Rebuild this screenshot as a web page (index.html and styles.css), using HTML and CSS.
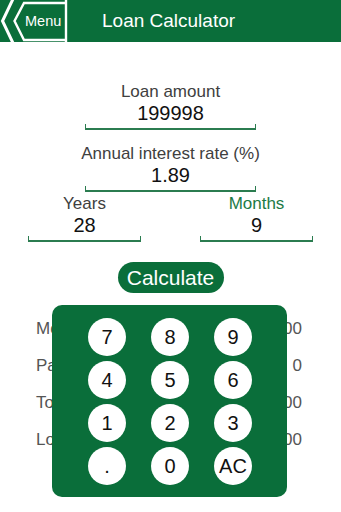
FILE: index.html
```html
<!DOCTYPE html>
<html>
<head>
<meta charset="utf-8">
<link rel="stylesheet" href="styles.css">
</head>
<body>
<div class="page">
  <header class="topbar">
    <div class="menu">
      <svg class="menu-shape" width="68" height="42" viewBox="0 0 68 42">
        <polyline points="13,-1 2.5,21 13,43" fill="none" stroke="#fff" stroke-width="3"/>
        <polyline points="66,3 24,3 14.5,21 24,40 66,40" fill="none" stroke="#fff" stroke-width="2.4"/>
        <line x1="66" y1="0" x2="66" y2="42" stroke="#fff" stroke-width="2.4"/>
      </svg>
      <span class="menu-text">Menu</span>
    </div>
    <h1 class="title">Loan Calculator</h1>
  </header>

  <main class="form">
    <div class="field field-wide gap-big">
      <div class="label">Loan amount</div>
      <div class="value">199998</div>
      <div class="underline"></div>
    </div>
    <div class="field field-wide gap-small">
      <div class="label">Annual interest rate (%)</div>
      <div class="value">1.89</div>
      <div class="underline"></div>
    </div>
    <div class="pair">
      <div class="field">
        <div class="label">Years</div>
        <div class="value">28</div>
        <div class="underline"></div>
      </div>
      <div class="field">
        <div class="label label-active">Months</div>
        <div class="value">9</div>
        <div class="underline"></div>
      </div>
    </div>
    <button class="calc">Calculate</button>

    <div class="results">
      <div class="result"><span>Monthly payment</span><span>0.00</span></div>
      <div class="result"><span>Payments</span><span>0</span></div>
      <div class="result"><span>Total payment</span><span>0.00</span></div>
      <div class="result"><span>Loan interest</span><span>0.00</span></div>
    </div>
  </main>

  <div class="keypad">
    <button class="key">7</button>
    <button class="key">8</button>
    <button class="key">9</button>
    <button class="key">4</button>
    <button class="key">5</button>
    <button class="key">6</button>
    <button class="key">1</button>
    <button class="key">2</button>
    <button class="key">3</button>
    <button class="key">.</button>
    <button class="key">0</button>
    <button class="key">AC</button>
  </div>
</div>
</body>
</html>
```

FILE: styles.css
```css
html, body {
  margin: 0;
  padding: 0;
  background: #fff;
}

.page {
  position: relative;
  width: 341px;
  height: 512px;
  overflow: hidden;
  font-family: "Liberation Sans", Arial, sans-serif;
}

.topbar {
  height: 42px;
  background: #0a6e3a;
  display: flex;
  align-items: center;
}

.menu {
  position: relative;
  width: 68px;
  height: 42px;
  flex: none;
}

.menu-shape {
  display: block;
}

.menu-text {
  position: absolute;
  left: 25px;
  top: 12px;
  color: #fff;
  font-size: 14.5px;
  line-height: 18px;
}

.title {
  margin: 0 0 0 34px;
  color: #fff;
  font-weight: normal;
  font-size: 19px;
  line-height: 22px;
}

.form {
  display: flex;
  flex-direction: column;
  align-items: center;
  padding-top: 40px;
}

.field {
  display: flex;
  flex-direction: column;
  align-items: center;
  width: 113px;
}

.field-wide {
  width: 171px;
}

.gap-big {
  margin-bottom: 14px;
}

.gap-small {
  margin-bottom: 2px;
}

.label {
  font-size: 17px;
  line-height: 20px;
  color: #404040;
  white-space: nowrap;
}

.label-active {
  color: #1c7a46;
}

.value {
  font-size: 20px;
  line-height: 22px;
  color: #111;
}

.underline {
  align-self: stretch;
  height: 4px;
  margin-top: 0;
  border-bottom: 2px solid #2b7c50;
  background:
    linear-gradient(#2b7c50, #2b7c50) left bottom / 1px 100% no-repeat,
    linear-gradient(#2b7c50, #2b7c50) right bottom / 1px 100% no-repeat;
}

.pair {
  align-self: stretch;
  display: flex;
  justify-content: space-between;
  padding: 0 28px;
}

.calc {
  margin-top: 20px;
  width: 106px;
  height: 31px;
  border: none;
  border-radius: 16px;
  background: #0a6e3a;
  color: #fff;
  font-family: "Liberation Sans", Arial, sans-serif;
  font-size: 21px;
  line-height: 31px;
  padding: 0;
}

.results {
  align-self: stretch;
  margin-top: 26px;
  padding: 0 39px 0 36px;
  display: flex;
  flex-direction: column;
  gap: 17px;
}

.result {
  display: flex;
  justify-content: space-between;
  font-size: 17px;
  line-height: 20px;
  color: #555;
}

.keypad {
  position: absolute;
  left: 52px;
  top: 305px;
  width: 235px;
  height: 192px;
  box-sizing: border-box;
  padding: 13px 35px 13px 36px;
  background: #0a6e3a;
  border-radius: 10px;
  display: grid;
  grid-template-columns: repeat(3, 38px);
  grid-auto-rows: 38px;
  column-gap: 25px;
  row-gap: 5px;
}

.key {
  width: 38px;
  height: 38px;
  border: none;
  border-radius: 50%;
  background: #fff;
  color: #111;
  font-family: "Liberation Sans", Arial, sans-serif;
  font-size: 20px;
  line-height: 38px;
  padding: 0;
  text-align: center;
}
```
